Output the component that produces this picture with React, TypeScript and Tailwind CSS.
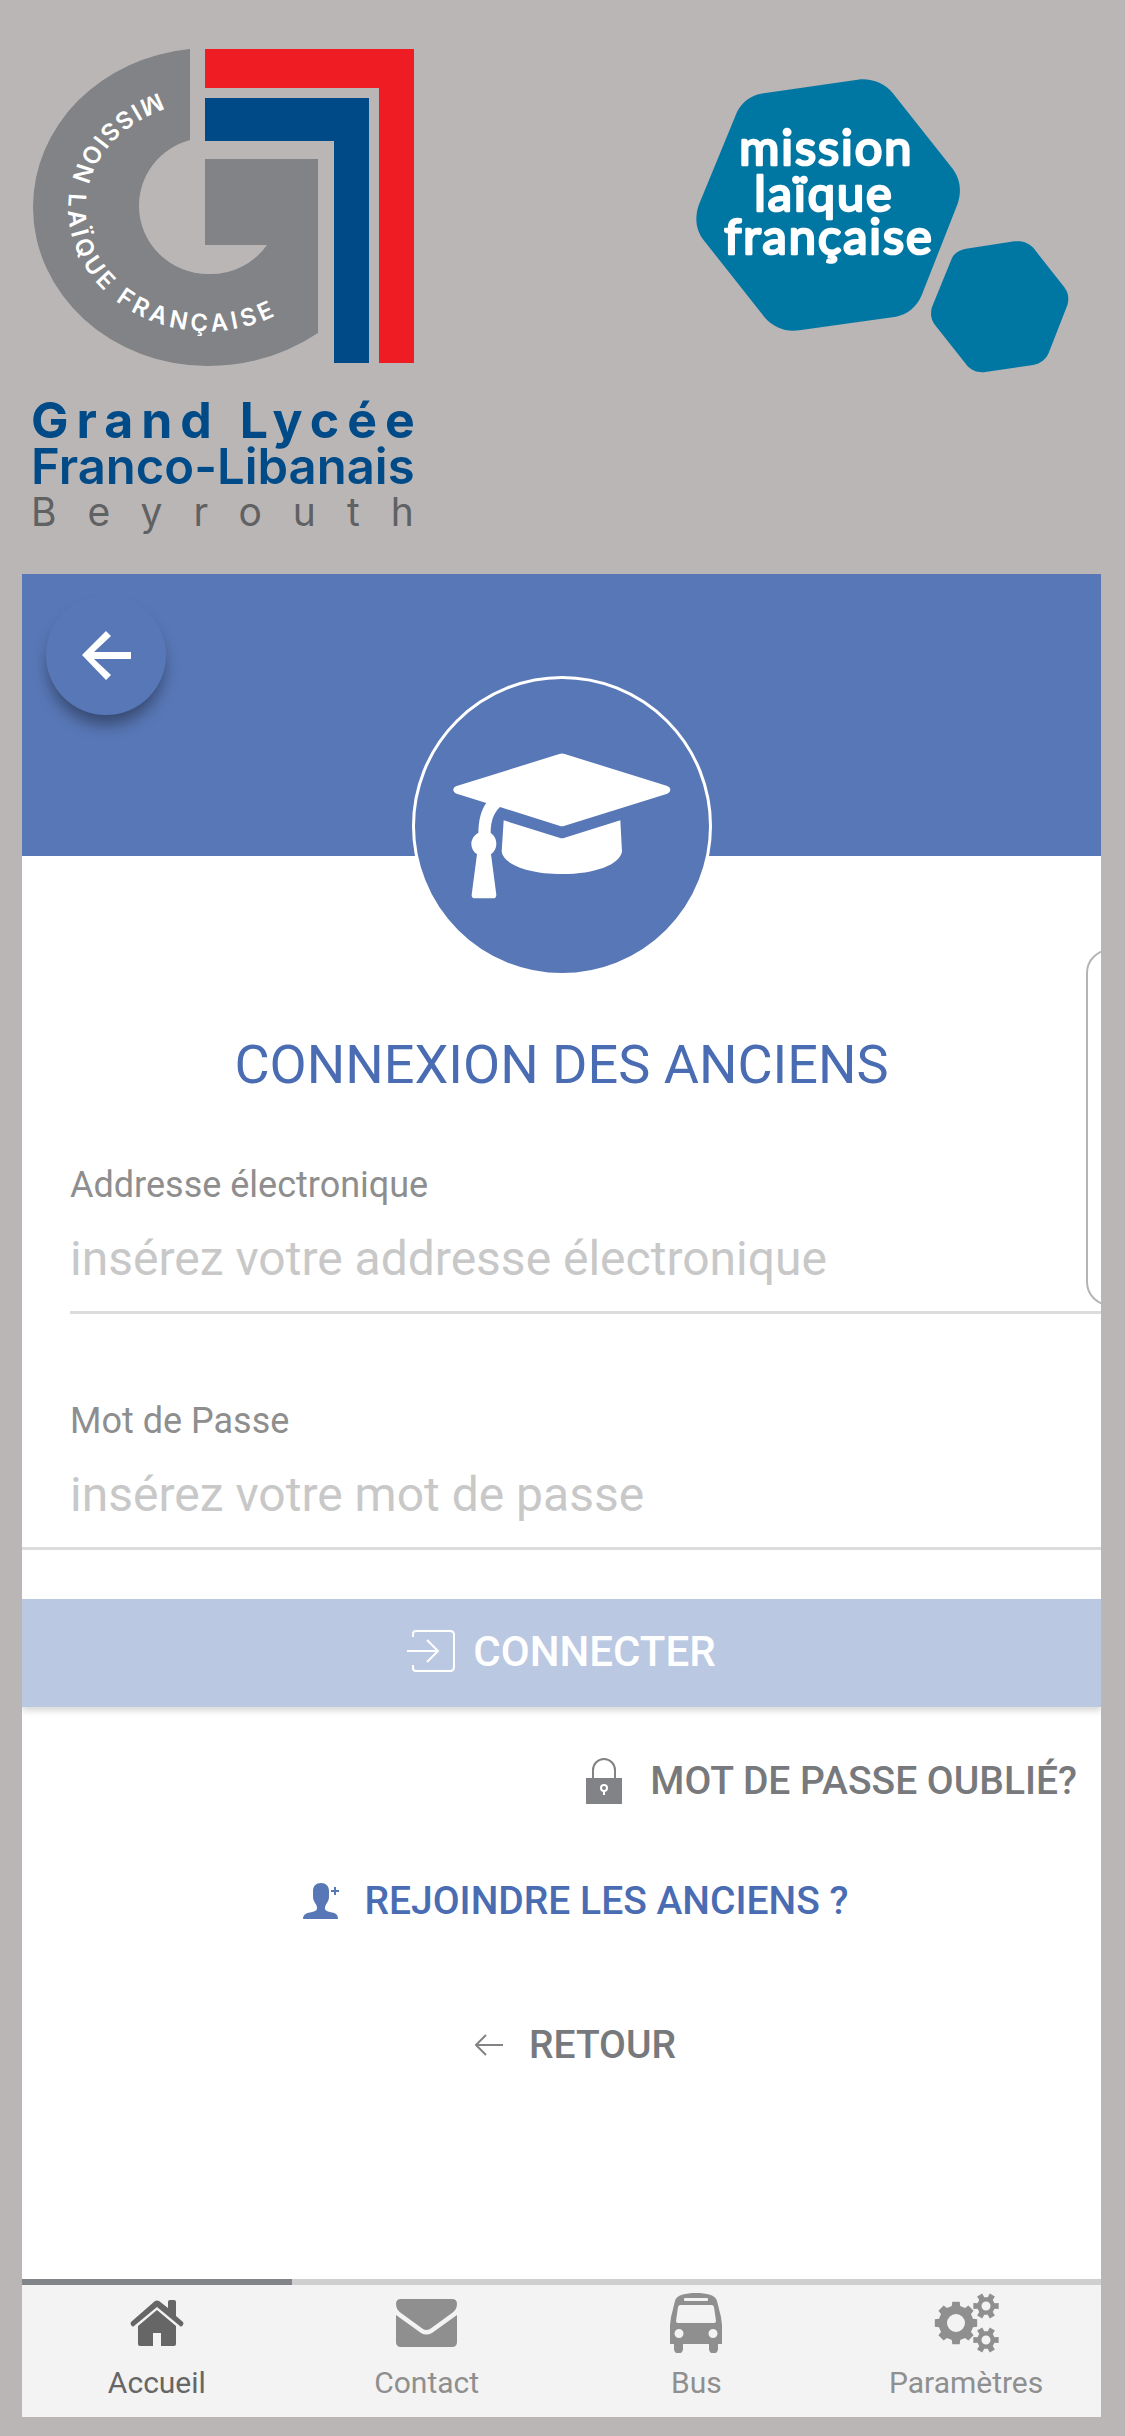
import type { ReactNode } from 'react'

function SchoolLogo() {
  return (
    <svg
      viewBox="32 48 383 492"
      className="w-[383px] h-[492px] overflow-visible font-[Inter,sans-serif]"
      role="img"
      aria-label="Grand Lycée Franco-Libanais Beyrouth"
    >
      <path d="M205 49H414V363H379V88H205Z" fill="#ef1c24" />
      <path d="M205 98H369V363H334V141H205Z" fill="#004b87" />
      <path
        d="M190 49A175 159 0 0 0 33 207A175 159 0 0 0 208 366Q268 366 318 333V159H205V245H267A69 68 0 0 1 208 274A69 68 0 0 1 139 206A69 68 0 0 1 190 140Z"
        fill="#818386"
      />
      <path id="arc" d="M159 93A139 123 0 1 0 300 300" fill="none" />
      <text className="text-[24px] font-semibold tracking-[4px]" fill="#fff">
        <textPath href="#arc">MISSION LAÏQUE FRANÇAISE</textPath>
      </text>
      <text x="31" y="438" className="text-[50px] font-bold tracking-[8px]" fill="#004b87">Grand Lycée</text>
      <text x="31" y="484" className="text-[49px] font-semibold" fill="#004b87">Franco-Libanais</text>
      <text x="31" y="526" className="text-[39px] tracking-[31px]" fill="#5f6163">Beyrouth</text>
    </svg>
  )
}

function MissionLogo() {
  return (
    <svg
      viewBox="80 86 1119 882"
      className="mt-[31px] w-[373px] h-[294px] overflow-visible font-[Lato,sans-serif]"
      role="img"
      aria-label="mission laïque française"
    >
      <g fill="#0077a3">
        <path d="M275 130L565 88C605 83 645 98 670 128L850 355C872 385 878 420 865 460L757 735C742 770 715 792 680 799L390 840C350 846 312 832 285 800L105 572C80 542 75 505 88 465L203 185C218 155 245 135 275 130Z" />
        <path d="M890 595L1035 573C1060 570 1080 578 1093 594L1185 711C1197 727 1200 745 1194 765L1138 908C1130 928 1112 940 1092 944L948 965C925 968 905 960 892 944L797 824C785 808 782 790 788 770L848 623C856 607 872 598 890 595Z" />
      </g>
      <g fill="#fff" stroke="#fff" strokeWidth="8" strokeLinejoin="round" textAnchor="middle" className="text-[146px] tracking-[6px]">
        <text x="471" y="344">mission</text>
        <text x="464" y="483">laïque</text>
        <text x="479" y="612">française</text>
      </g>
    </svg>
  )
}

function BackArrow() {
  return (
    <svg viewBox="0 0 49 49" className="w-[49px] h-[49px]" fill="#fff" aria-hidden="true">
      <path d="M24 0L29 5L12 21H49V28H12L29 44L24 49L0 24Z" />
    </svg>
  )
}

function GraduationCap() {
  return (
    <svg viewBox="218 310 654 438" className="w-[218px] h-[146px]" fill="#fff" aria-hidden="true">
      <path d="M537 313Q545 310 553 313L861 409Q870 413 870 420Q870 428 861 432L553 528Q545 531 537 528L359 472C340 490 331 515 331 550C343 558 348 570 348 583C348 596 342 606 332 614L348 735Q348 746 338 746H284Q273 746 274 735L290 614C279 606 273 596 273 583C273 570 281 556 294 550C295 510 302 482 318 460L229 432Q219 428 219 420Q219 413 229 409Z" />
      <path d="M370 512L537 564Q545 567 553 564L720 512L725 606C718 644 646 673 545 673C444 673 370 644 364 606Z" />
    </svg>
  )
}

function LoginIcon() {
  return (
    <svg viewBox="0 0 48 42" className="w-12 h-[42px]" fill="none" stroke="#fff" strokeWidth="2" aria-hidden="true">
      <path d="M6 7V4Q6 1 9 1H43Q47 1 47 5V37Q47 41 43 41H9Q6 41 6 38V35M0 21H31M20 10L31 21L20 32" />
    </svg>
  )
}

function LockIcon() {
  return (
    <svg viewBox="0 0 36 46" className="w-9 h-[46px]" aria-hidden="true">
      <path d="M7 21V12A11 11 0 0 1 29 12V21" fill="none" stroke="#818386" strokeWidth="2" />
      <path d="M0 20H36V46H0Z" fill="#818386" />
      <circle cx="18" cy="30" r="3" fill="none" stroke="#fff" strokeWidth="2" />
      <path d="M18 33V37" stroke="#fff" strokeWidth="2" />
    </svg>
  )
}

function AddPersonIcon() {
  return (
    <svg viewBox="0 0 36 36" className="w-9 h-9" fill="#5877b6" aria-hidden="true">
      <path d="M18 0C23 0 26 3 26 8V14C26 19 22 21 22 25C22 28 24 28 27 29C32 30 35 31 35 36H0C0 31 4 30 9 29C12 28 14 28 14 25C14 21 10 19 10 14V8C10 3 13 0 18 0Z" />
      <path d="M31 4H33V7H36V9H33V12H31V9H28V7H31Z" />
    </svg>
  )
}

function ThinArrowIcon() {
  return (
    <svg viewBox="0 0 28 22" className="w-7 h-[22px]" fill="none" stroke="#818386" strokeWidth="2" aria-hidden="true">
      <path d="M28 11H1M11 1L1 11L11 21" />
    </svg>
  )
}

function HomeIcon() {
  return (
    <svg viewBox="0 0 54 47" className="w-[54px] h-[47px]" fill="#666" aria-hidden="true">
      <path d="M25 1Q27 0 29 1L38 8V2Q38 0 40 0H44Q46 0 46 2V16L53 22Q54 23 53 25L52 26Q51 27 50 26L27 7L4 26Q3 27 2 26L1 25Q0 23 1 22Z" />
      <path d="M27 10L46 26V44Q46 46 44 46H31V33H23V46H10Q8 46 8 44V26Z" />
    </svg>
  )
}

function MailIcon() {
  return (
    <svg viewBox="0 0 61 48" className="w-[61px] h-12" fill="#8f8f8f" aria-hidden="true">
      <path d="M5 0H56Q61 0 61 5C61 9 59 12 56 14L34 30Q30 32 27 30L5 14C2 12 0 9 0 5Q0 0 5 0Z" />
      <path d="M0 16L25 34Q30 37 36 34L61 16V43Q61 48 56 48H5Q0 48 0 43Z" />
    </svg>
  )
}

function BusIcon() {
  return (
    <svg viewBox="0 0 52 60" className="w-[52px] h-[60px]" fill="#8f8f8f" aria-hidden="true">
      <path
        fillRule="evenodd"
        d="M26 0C36 0 46 2 47 8L51 24L52 32V51H48V56A4 4 0 0 1 39 56V51H13V56A4 4 0 0 1 4 56V51H0V32L1 24L5 8C6 2 16 0 26 0ZM15 5Q14 5 14 6V7Q14 8 15 8H37Q38 8 38 7V6Q38 5 37 5ZM10 12Q9 12 8 14L6 28Q6 30 8 30H44Q46 30 46 28L44 14Q43 12 42 12ZM9 36A4.5 4.5 0 0 0 9 45A4.5 4.5 0 0 0 9 36ZM43 36A4.5 4.5 0 0 0 43 45A4.5 4.5 0 0 0 43 36Z"
      />
    </svg>
  )
}

// Outline of a toothed wheel with a round hole in the middle
function gearPath(cx: number, cy: number, outer: number, root: number, hole: number, teeth: number): string {
  const step = (Math.PI * 2) / teeth
  const point = (r: number, a: number) => `${(cx + r * Math.cos(a)).toFixed(2)} ${(cy + r * Math.sin(a)).toFixed(2)}`
  const points: string[] = []
  for (let i = 0; i < teeth; i++) {
    const a = i * step
    points.push(
      point(root, a - step * 0.31),
      point(outer, a - step * 0.22),
      point(outer, a + step * 0.22),
      point(root, a + step * 0.31),
    )
  }
  return `M${points.join('L')}ZM${cx - hole} ${cy}a${hole} ${hole} 0 1 0 ${hole * 2} 0a${hole} ${hole} 0 1 0 ${-hole * 2} 0Z`
}

function GearsIcon() {
  return (
    <svg viewBox="0 0 65 60" className="w-[65px] h-[60px]" fill="#8f8f8f" fillRule="evenodd" aria-hidden="true">
      <path d={gearPath(22, 30, 21.5, 17.5, 9, 8)} />
      <path d={gearPath(52, 13, 13, 9, 4.5, 6)} />
      <path d={gearPath(52, 47, 13, 9, 4.5, 6)} />
    </svg>
  )
}

interface FieldProps {
  id: string
  label: string
  type: string
  placeholder: string
}

function Field({ id, label, type, placeholder }: FieldProps) {
  return (
    <div className="flex flex-col pb-6">
      <label htmlFor={id} className="text-[36px] leading-10 text-[#8e8e8e]">{label}</label>
      <input
        id={id}
        type={type}
        placeholder={placeholder}
        className="mt-[26px] h-14 w-full bg-transparent text-[48px] leading-[56px] outline-none placeholder:text-[#c8c8c8]"
      />
    </div>
  )
}

interface TabProps {
  label: string
  icon: ReactNode
  active?: boolean
}

function Tab({ label, icon, active }: TabProps) {
  return (
    <a
      href="#"
      className={`flex flex-col items-center flex-1 border-t-[6px] pt-2 pb-4 text-[30px] leading-9 ${
        active ? 'border-[#818589] text-[#666]' : 'border-[#cfcfcf] text-[#8f8f8f]'
      }`}
    >
      <span className="flex items-center justify-center h-[60px] mb-3">{icon}</span>
      {label}
    </a>
  )
}

export default function App() {
  return (
    <div className="flex flex-col min-h-screen bg-[#bab6b5] pb-[19px] font-[Roboto,sans-serif]">
      <header className="flex items-start justify-between pl-8 pr-14 pt-12 pb-[34px]">
        <SchoolLogo />
        <MissionLogo />
      </header>

      <div className="relative flex flex-col flex-1 ml-[22px] mr-6 overflow-hidden bg-white">
        {/* Banner */}
        <div className="relative h-[282px] bg-[#5877b6] pl-6 pt-[21px]">
          <button
            type="button"
            aria-label="Retour"
            className="flex items-center justify-center size-[120px] rounded-full bg-[#5877b6] shadow-[0_12px_16px_-3px_rgba(0,0,0,0.4)]"
          >
            <BackArrow />
          </button>
          <div className="absolute left-1/2 top-[102px] -translate-x-1/2 flex items-center justify-center size-[300px] rounded-full border-[3px] border-white bg-[#5877b6]">
            <GraduationCap />
          </div>
        </div>

        {/* Edge handle, partly off screen */}
        <div className="absolute -right-[33px] top-[375px] h-[357px] w-12 rounded-3xl border-2 border-[#b4b4b4]" />

        <main className="flex flex-col flex-1">
          <h1 className="mt-[177px] text-center text-[54px] leading-[64px] text-[#4a6cb3]">CONNEXION DES ANCIENS</h1>

          <form className="flex flex-col mt-[68px]">
            <div className="ml-12 border-b-[3px] border-[#dcdcdc]">
              <Field id="email" label="Addresse électronique" type="email" placeholder="insérez votre addresse électronique" />
            </div>
            <div className="mt-[87px] pl-12 border-b-[3px] border-[#dcdcdc]">
              <Field id="password" label="Mot de Passe" type="password" placeholder="insérez votre mot de passe" />
            </div>
            <button
              type="submit"
              className="mt-[49px] flex h-[108px] items-center justify-center gap-[18px] bg-[#bbc8e2] pb-1 text-[42px] font-medium text-white shadow-[0_4px_6px_rgba(0,0,0,0.15)]"
            >
              <LoginIcon />
              CONNECTER
            </button>
          </form>

          <div className="flex flex-col text-[39px] leading-[48px] font-medium text-[#77797c]">
            <button type="button" className="mt-[50px] mr-6 flex items-center self-end gap-7">
              <LockIcon />
              MOT DE PASSE OUBLIÉ?
            </button>
            <button type="button" className="mt-[72px] flex items-center self-center gap-[26px] pl-7 text-[#4a6cb3]">
              <AddPersonIcon />
              REJOINDRE LES ANCIENS ?
            </button>
            <button type="button" className="mt-24 flex items-center self-center gap-[26px] pl-7">
              <ThinArrowIcon />
              RETOUR
            </button>
          </div>
        </main>

        {/* Tab bar */}
        <nav className="flex bg-[#f3f3f3]">
          <Tab label="Accueil" icon={<HomeIcon />} active />
          <Tab label="Contact" icon={<MailIcon />} />
          <Tab label="Bus" icon={<BusIcon />} />
          <Tab label="Paramètres" icon={<GearsIcon />} />
        </nav>
      </div>
    </div>
  )
}
